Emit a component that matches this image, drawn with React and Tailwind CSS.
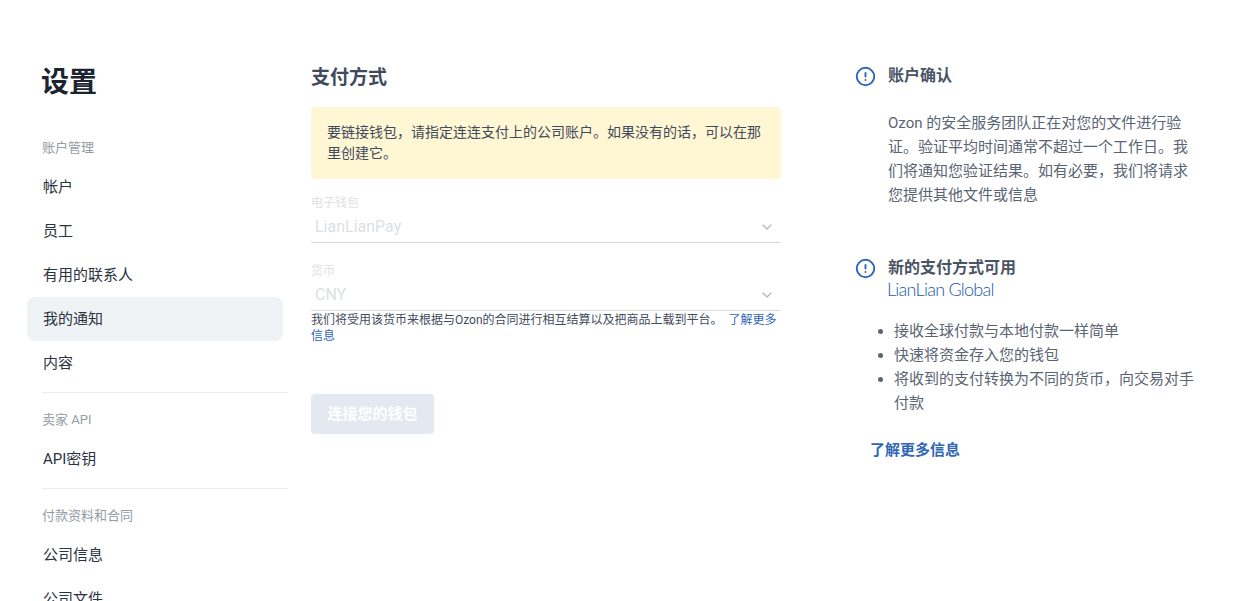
import React from 'react';
import { ChevronDown, CircleAlert } from 'lucide-react';

const FONT = 'font-["Roboto","Noto_Sans_CJK_SC",sans-serif]';

function NavLabel({ children, className = '' }) {
  return <div className={`pl-[15px] text-[13px] leading-[20px] text-[#959ba4] ${className}`}>{children}</div>;
}

function NavItem({ children, active }) {
  return (
    <div className={`flex h-[44px] w-[256px] items-center rounded-[8px] pl-[16px] text-[15px] text-[#2b3340] ${active ? 'bg-[#eff3f6]' : ''}`}>
      {children}
    </div>
  );
}

function Sidebar() {
  return (
    <aside className="ml-[27px] w-[261px] shrink-0">
      <h1 className="mt-[64px] pl-[14px] text-[28px] leading-[38px] font-bold text-[#1c2431]">设置</h1>
      <NavLabel className="mt-[36px]">账户管理</NavLabel>
      <div className="mt-[7px]">
        <NavItem>帐户</NavItem>
        <NavItem>员工</NavItem>
        <NavItem>有用的联系人</NavItem>
        <NavItem active>我的通知</NavItem>
        <NavItem>内容</NavItem>
      </div>
      <div className="mt-[7px] ml-[15px] h-px bg-[#e8ebee]" />
      <NavLabel className="mt-[17px]">卖家 API</NavLabel>
      <div className="mt-[7px]">
        <NavItem>API密钥</NavItem>
      </div>
      <div className="mt-[7px] ml-[15px] h-px bg-[#e8ebee]" />
      <NavLabel className="mt-[17px]">付款资料和合同</NavLabel>
      <div className="mt-[7px]">
        <NavItem>公司信息</NavItem>
        <NavItem>公司文件</NavItem>
      </div>
    </aside>
  );
}

function SelectField({ label, value }) {
  return (
    <div className="border-b border-[#d9dce0]">
      <div className="h-[16px] text-[12px] leading-[16px] text-[#dfe1e4]">{label}</div>
      <div className="flex h-[31px] items-center justify-between pr-[6px] pl-[4px] text-[16px] text-[#dcdfe3]">
        <span>{value}</span>
        <ChevronDown size={16} strokeWidth={2} className="text-[#b5bac1]" />
      </div>
    </div>
  );
}

function Main() {
  return (
    <main className="ml-[23px] w-[470px] shrink-0">
      <h2 className="mt-[64px] text-[19px] leading-[28px] font-bold text-[#3f4a5c]">支付方式</h2>
      <div className="mt-[15px] h-[72px] rounded-[4px] bg-[#fff6d3] px-[16px] py-[15px] text-[14px] leading-[21px] text-[#3f4a5c]">
        要链接钱包，请指定连连支付上的公司账户。如果没有的话，可以在那里创建它。
      </div>
      <div className="mt-[16px]">
        <SelectField label="电子钱包" value="LianLianPay" />
      </div>
      <div className="mt-[20px]">
        <SelectField label="货币" value="CNY" />
      </div>
      <p className="mt-[1px] text-[12px] leading-[16px] text-[#3f4a5c]">
        我们将受用该货币来根据与Ozon的合同进行相互结算以及把商品上载到平台。 <span className="ml-[3px] text-[#2f66b5]">了解更多信息</span>
      </p>
      <button className="mt-[50px] h-[40px] w-[123px] rounded-[4px] bg-[#e4e9f1] text-[15px] font-bold text-white">
        连接您的钱包
      </button>
    </main>
  );
}

function InfoTitle({ children }) {
  return (
    <div className="flex items-center">
      <CircleAlert size={21} strokeWidth={2.2} className="shrink-0 text-[#2f66b5]" />
      <h3 className="ml-[12px] text-[16px] leading-[24px] font-bold text-[#4a5464]">{children}</h3>
    </div>
  );
}

function InfoColumn() {
  return (
    <section className="ml-[74px] w-[345px] shrink-0 text-[15px] leading-[24px] text-[#5a6473]">
      <div className="mt-[64px]">
        <InfoTitle>账户确认</InfoTitle>
        <p className="mt-[23px] ml-[33px] w-[305px]">
          Ozon 的安全服务团队正在对您的文件进行验证。验证平均时间通常不超过一个工作日。我们将通知您验证结果。如有必要，我们将请求您提供其他文件或信息
        </p>
      </div>
      <div className="mt-[49px]">
        <InfoTitle>新的支付方式可用</InfoTitle>
        <div className="ml-[32px] h-[18px] font-['Lato',sans-serif] text-[18px] leading-[18px] font-light tracking-[-0.75px] text-[#2158ad]">
          LianLian Global
        </div>
        <ul className="mt-[21px] ml-[39px] w-[305px] list-disc pl-0">
          <li>接收全球付款与本地付款一样简单</li>
          <li>快速将资金存入您的钱包</li>
          <li>将收到的支付转换为不同的货币，向交易对手付款</li>
        </ul>
        <div className="mt-[23px] ml-[15px] font-bold text-[#2f66b5]">了解更多信息</div>
      </div>
    </section>
  );
}

export default function App() {
  return (
    <div className={`flex h-[601px] w-full overflow-hidden bg-white ${FONT}`}>
      <Sidebar />
      <Main />
      <InfoColumn />
    </div>
  );
}
